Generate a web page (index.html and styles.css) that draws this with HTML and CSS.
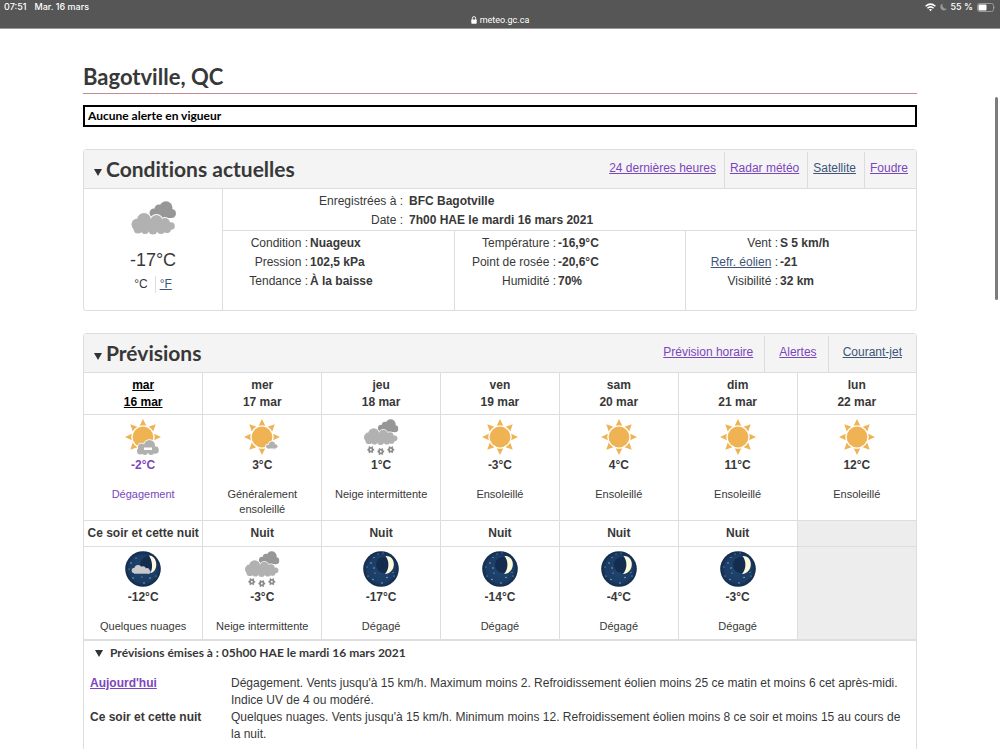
FILE: index.html
```html
<!DOCTYPE html>
<html lang="fr">
<head>
<meta charset="utf-8">
<meta name="viewport" content="width=device-width, initial-scale=1">
<title>Bagotville, QC</title>
<link rel="stylesheet" href="styles.css">
</head>
<body>
<svg class="defs" width="0" height="0" aria-hidden="true">
  <defs>
    <radialGradient id="sky"><stop offset="0" stop-color="#1f4570"/><stop offset=".75" stop-color="#1b3d66"/><stop offset="1" stop-color="#122a49"/></radialGradient>
    <symbol id="sun" viewBox="0 0 36 36">
      <g fill="#f0b354">
        <circle cx="18" cy="18" r="10.400"/>
        <path id="ray" d="M18 0l3.300 6.800q-3.300-1.200-6.600 0z"/>
        <use href="#ray" transform="rotate(45 18 18)"/><use href="#ray" transform="rotate(90 18 18)"/><use href="#ray" transform="rotate(135 18 18)"/><use href="#ray" transform="rotate(180 18 18)"/><use href="#ray" transform="rotate(225 18 18)"/><use href="#ray" transform="rotate(270 18 18)"/><use href="#ray" transform="rotate(315 18 18)"/>
      </g>
    </symbol>
    <symbol id="mostly-sunny" viewBox="0 0 36 36">
      <use href="#sun" width="36" height="36"/>
      <g id="puff"><circle cx="24" cy="27.500" r="2"/><circle cx="28" cy="25.500" r="3"/><circle cx="31.500" cy="27.300" r="2"/><rect x="24" y="26" width="8" height="3.500"/></g>
      <use href="#puff" fill="#fff" stroke="#fff" stroke-width="1.600"/>
      <use href="#puff" fill="#b0b0b0"/>
    </symbol>
    <symbol id="clearing" viewBox="0 0 36 36">
      <use href="#sun" width="36" height="36"/>
      <g id="heap"><circle cx="16.500" cy="28" r="3.500"/><circle cx="15.500" cy="32" r="3.500"/><circle cx="24.500" cy="26.500" r="5.500"/><circle cx="30" cy="31" r="3.800"/><circle cx="20" cy="33.500" r="2.500"/><circle cx="26" cy="33" r="3"/><rect x="17" y="26" width="12" height="8"/></g>
      <use href="#heap" fill="#fff" stroke="#fff" stroke-width="1.600"/>
      <use href="#heap" fill="#b0b0b0"/>
      <rect x="19" y="28.500" width="8" height="2.500" fill="#fff"/>
    </symbol>
    <symbol id="cloudy" viewBox="0 0 45 34">
      <g fill="#979797"><circle cx="35" cy="6.800" r="6.500"/><circle cx="28" cy="8" r="4.500"/><circle cx="23" cy="12" r="4.500"/><circle cx="40.500" cy="12.500" r="4.500"/><rect x="24" y="8" width="16" height="9"/></g>
      <g id="bank"><circle cx="13" cy="19" r="7"/><circle cx="6.500" cy="23.500" r="6"/><circle cx="7" cy="28" r="4.500"/><circle cx="25.500" cy="20" r="6"/><circle cx="34" cy="22" r="5"/><circle cx="40" cy="25" r="3.800"/><circle cx="36" cy="28" r="4"/><circle cx="30" cy="29" r="4"/><circle cx="22" cy="29" r="4.500"/><circle cx="14" cy="29" r="4"/><rect x="8" y="18" width="28" height="12"/></g>
      <use href="#bank" fill="#fff" stroke="#fff" stroke-width="1.800"/>
      <use href="#bank" fill="#b1b1b1"/>
    </symbol>
    <symbol id="flurries" viewBox="0 0 36 37">
      <use href="#cloudy" width="36" height="27"/>
      <g stroke="#8b8b8b" fill="none">
        <g id="flake"><circle cx="7.500" cy="31.500" r="1.900" stroke-width="1.800"/><path d="M5.800 31.500h-1.800M9.200 31.500h1.800M6.500 29.500l-.9-1.200M8.500 29.500l.9-1.200M6.500 33.500l-.9 1.200M8.500 33.500l.9 1.200" stroke-width="1.500"/></g>
        <use href="#flake" x="10.300" y="2"/><use href="#flake" x="20.600"/>
      </g>
    </symbol>
    <symbol id="night" viewBox="0 0 36 36">
      <circle cx="18" cy="18" r="17.800" fill="url(#sky)"/>
      <circle cx="21" cy="14" r="8" fill="#142d4e"/>
      <path d="M22.500 5C33.500 4 34 22 22 23C26.500 18 26.500 10 22.500 5z" fill="#fdfbdc"/>
      <g fill="#a9bccd"><circle cx="11" cy="6.500" r=".6"/><circle cx="8" cy="12" r=".7"/><circle cx="4" cy="16" r=".5"/><circle cx="11" cy="17" r=".7"/><circle cx="12" cy="22" r=".6"/><circle cx="5" cy="25" r=".6"/><circle cx="10" cy="28.500" r=".7"/><circle cx="19" cy="32" r=".7"/><circle cx="24" cy="26.500" r=".7"/><circle cx="31" cy="25" r=".6"/><circle cx="30" cy="21.500" r=".5"/><circle cx="15" cy="3" r=".5"/><circle cx="20" cy="2" r=".5"/></g>
    </symbol>
    <symbol id="night-cloud" viewBox="0 0 36 36">
      <circle cx="18" cy="18" r="17.800" fill="url(#sky)"/>
      <path d="M15 15c0-6 4-10 10-10 3 5 3 9 1 14z" fill="#142d4e"/>
      <path d="M24 4.500C33.500 5 33.500 21 25.500 22C28 17 27.500 10 24 4.500z" fill="#fdfbdc"/>
      <g fill="#c9c9cb"><circle cx="9.500" cy="19.500" r="2.800"/><circle cx="13" cy="17.500" r="3.500"/><circle cx="18" cy="18" r="2.800"/><circle cx="22" cy="19.500" r="2.500"/><circle cx="24" cy="21" r="1.700"/><rect x="9" y="18" width="15" height="4.700"/></g>
      <g fill="#a9bccd"><circle cx="11" cy="7" r=".6"/><circle cx="6" cy="12" r=".7"/><circle cx="4" cy="18" r=".5"/><circle cx="8" cy="27" r=".7"/><circle cx="17" cy="26" r=".6"/><circle cx="19" cy="32" r=".7"/><circle cx="25" cy="27" r=".7"/><circle cx="31" cy="25" r=".6"/></g>
    </symbol>
  </defs>
</svg>

<header class="status">
  <div class="status-row">
    <div class="status-group"><time>07:51</time><span>Mar. 16 mars</span></div>
    <div class="status-group status-right">
      <svg width="11" height="9" viewBox="0 0 11 9" fill="none" stroke="#fff" stroke-width="1.500" aria-label="Wi-Fi"><path d="M.6 3.200q4.900-4.200 9.800 0M2.400 5.200q3.100-2.600 6.200 0"/><path d="M3.900 6.500q1.600-1.200 3.200 0L5.500 8.300z" fill="#fff" stroke="none"/></svg>
      <svg width="7" height="8" viewBox="0 0 7 8" aria-hidden="true"><path d="M2.500.5C.3 1.500-.3 4 1 6 2.400 7.900 5.500 7.900 6.900 5.700 3.800 6.300 1.700 3.500 2.500.5z" fill="#999"/></svg>
      <span>55 %</span>
      <svg width="19" height="9" viewBox="0 0 19 9" aria-label="Batterie"><rect x=".5" y=".5" width="16" height="8" rx="2" fill="none" stroke="#999"/><rect x="1.500" y="1.500" width="8" height="6" rx="1" fill="#fff"/><path d="M17.500 3v3q1.500-1.500 0-3" fill="#999"/></svg>
    </div>
  </div>
  <div class="address">
    <svg width="6" height="8" viewBox="0 0 6 8" aria-hidden="true"><rect x=".3" y="3.500" width="5.400" height="4.300" rx=".7" fill="#fff"/><path d="M1.300 4V2.300a1.700 1.700 0 0 1 3.400 0V4" fill="none" stroke="#fff" stroke-width=".9"/></svg>
    <span>meteo.gc.ca</span>
  </div>
</header>
<div class="scroll-thumb"></div>

<main>
  <h1>Bagotville, QC</h1>
  <p class="alert">Aucune alerte en vigueur</p>

  <details class="card" open>
    <summary class="card-head">
      <span class="marker"></span>
      <h2>Conditions actuelles</h2>
      <nav class="tabs">
        <a class="visited" href="#h24">24 dernières heures</a>
        <a class="visited" href="#radar">Radar météo</a>
        <a href="#satellite">Satellite</a>
        <a class="visited" href="#foudre">Foudre</a>
      </nav>
    </summary>
    <div class="current">
      <div class="now">
        <svg width="45" height="34" role="img" aria-label="Nuageux"><use href="#cloudy"/></svg>
        <p class="now-temp">-17°C</p>
        <p class="units"><span>°C</span><a href="#f">°F</a></p>
      </div>
      <div class="facts">
        <dl class="station">
          <dt>Enregistrées à :</dt><dd>BFC Bagotville</dd>
          <dt>Date :</dt><dd>7h00 HAE le mardi 16 mars 2021</dd>
        </dl>
        <div class="measures">
          <dl class="sky">
            <dt>Condition :</dt><dd>Nuageux</dd>
            <dt>Pression :</dt><dd>102,5 kPa</dd>
            <dt>Tendance :</dt><dd>À la baisse</dd>
          </dl>
          <dl class="heat">
            <dt>Température :</dt><dd>-16,9°C</dd>
            <dt>Point de rosée :</dt><dd>-20,6°C</dd>
            <dt>Humidité :</dt><dd>70%</dd>
          </dl>
          <dl class="wind">
            <dt>Vent :</dt><dd>S 5 km/h</dd>
            <dt><a href="#refr">Refr. éolien</a> :</dt><dd>-21</dd>
            <dt>Visibilité :</dt><dd>32 km</dd>
          </dl>
        </div>
      </div>
    </div>
  </details>

  <details class="card" open>
    <summary class="card-head">
      <span class="marker"></span>
      <h2>Prévisions</h2>
      <nav class="tabs wide">
        <a class="visited" href="#horaire">Prévision horaire</a>
        <a class="visited" href="#alertes">Alertes</a>
        <a href="#courant">Courant-jet</a>
      </nav>
    </summary>
    <table class="week">
      <thead>
        <tr class="days">
          <th scope="col" class="today">mar<br>16 mar</th>
          <th scope="col">mer<br>17 mar</th>
          <th scope="col">jeu<br>18 mar</th>
          <th scope="col">ven<br>19 mar</th>
          <th scope="col">sam<br>20 mar</th>
          <th scope="col">dim<br>21 mar</th>
          <th scope="col">lun<br>22 mar</th>
        </tr>
      </thead>
      <tbody>
        <tr class="day">
          <td class="visited"><svg class="icon" aria-hidden="true"><use href="#clearing"/></svg><b>-2°C</b><p>Dégagement</p></td>
          <td><svg class="icon" aria-hidden="true"><use href="#mostly-sunny"/></svg><b>3°C</b><p>Généralement ensoleillé</p></td>
          <td><svg class="icon" aria-hidden="true"><use href="#flurries"/></svg><b>1°C</b><p>Neige intermittente</p></td>
          <td><svg class="icon" aria-hidden="true"><use href="#sun"/></svg><b>-3°C</b><p>Ensoleillé</p></td>
          <td><svg class="icon" aria-hidden="true"><use href="#sun"/></svg><b>4°C</b><p>Ensoleillé</p></td>
          <td><svg class="icon" aria-hidden="true"><use href="#sun"/></svg><b>11°C</b><p>Ensoleillé</p></td>
          <td><svg class="icon" aria-hidden="true"><use href="#sun"/></svg><b>12°C</b><p>Ensoleillé</p></td>
        </tr>
        <tr class="nights">
          <th>Ce soir et cette nuit</th><th>Nuit</th><th>Nuit</th><th>Nuit</th><th>Nuit</th><th>Nuit</th><td class="empty"></td>
        </tr>
        <tr class="night">
          <td><svg class="icon" aria-hidden="true"><use href="#night-cloud"/></svg><b>-12°C</b><p>Quelques nuages</p></td>
          <td><svg class="icon" aria-hidden="true"><use href="#flurries"/></svg><b>-3°C</b><p>Neige intermittente</p></td>
          <td><svg class="icon" aria-hidden="true"><use href="#night"/></svg><b>-17°C</b><p>Dégagé</p></td>
          <td><svg class="icon" aria-hidden="true"><use href="#night"/></svg><b>-14°C</b><p>Dégagé</p></td>
          <td><svg class="icon" aria-hidden="true"><use href="#night"/></svg><b>-4°C</b><p>Dégagé</p></td>
          <td><svg class="icon" aria-hidden="true"><use href="#night"/></svg><b>-3°C</b><p>Dégagé</p></td>
          <td class="empty"></td>
        </tr>
      </tbody>
    </table>
    <details class="bulletin" open>
      <summary><span class="marker"></span>Prévisions émises à : 05h00 HAE le mardi 16 mars 2021</summary>
      <dl>
        <dt><a class="visited" href="#aujourdhui">Aujourd'hui</a></dt>
        <dd>Dégagement. Vents jusqu'à 15 km/h. Maximum moins 2. Refroidissement éolien moins 25 ce matin et moins 6 cet après-midi. Indice UV de 4 ou modéré.</dd>
        <dt>Ce soir et cette nuit</dt>
        <dd>Quelques nuages. Vents jusqu'à 15 km/h. Minimum moins 12. Refroidissement éolien moins 8 ce soir et moins 15 au cours de la nuit.</dd>
      </dl>
    </details>
  </details>
</main>
</body>
</html>
```

FILE: styles.css
```css
* { box-sizing: border-box; }

body {
  margin: 0;
  height: 100vh;
  overflow: hidden;
  background: #fff;
  color: #383838;
  font: 12px/17px "Liberation Sans", Arial, sans-serif;
}

h1, h2, p, dl, dd { margin: 0; }
a { color: #3e5478; }
.visited { color: #7b46bd; }
.defs { position: absolute; }

.status {
  height: 29px;
  background: #565656;
  border-bottom: 1px solid #999;
  color: #fff;
  font: 9px/14px Inter, sans-serif;
}
.status-row { display: flex; justify-content: space-between; padding: 0 4px; font-weight: 500; }
.status-group { display: flex; align-items: center; gap: 8px; }
.status-right { gap: 4px; }
.address {
  display: flex;
  justify-content: center;
  align-items: center;
  gap: 3px;
  font: 9px/12px Roboto, sans-serif;
}

.scroll-thumb {
  position: absolute;
  top: 97px;
  right: 2px;
  width: 3px;
  height: 203px;
  border-radius: 2px;
  background: #7c7c7c;
}

main { padding: 33px 83px 0; }

h1, h2, .alert, .bulletin summary { font-variant-ligatures: none; }

h1 {
  padding-bottom: 1px;
  border-bottom: 1px solid #c08c94;
  font: bold 22px/30px Lato, sans-serif;
  font-variant-ligatures: none;
}

.alert {
  margin: 11px 0 22px;
  padding: 0 3px;
  border: 2px solid #000;
  color: #000;
  font: bold 12px/18px Lato, sans-serif;
}

.card {
  margin-bottom: 22px;
  border: 1px solid #ddd;
  border-radius: 3px;
}
.card-head {
  display: flex;
  align-items: center;
  height: 39px;
  padding-left: 10px;
  background: #f4f4f4;
  border-bottom: 1px solid #ddd;
}
h2 {
  font: bold 21px/30px Lato, sans-serif;
  font-variant-ligatures: none;
}
.marker {
  margin: 6px 4px 0 0;
  border: 4px solid transparent;
  border-top: 7px solid #333;
  border-bottom: 0;
}

.tabs { display: flex; align-self: stretch; margin-left: auto; padding-top: 2px; }
.tabs a { padding: 8px 8px 0 5px; }
.tabs a + a { border-left: 1px solid #ddd; }
.wide a { padding: 8px 11px 0 14px; }
.wide a:last-child { padding-right: 14px; }

.current { display: grid; grid-template-columns: 138px 1fr; min-height: 121px; }
.now { display: flex; flex-direction: column; align-items: center; padding-top: 12px; }
.now-temp { margin-top: 13px; font-size: 18px; line-height: 24px; }
.units { display: flex; margin-top: 4px; }
.units a { margin-left: 7px; padding-left: 4px; border-left: 1px solid #ddd; }

.facts { display: grid; grid-template-rows: auto 1fr; border-left: 1px solid #ddd; }
.facts dl { display: grid; align-content: start; column-gap: 2px; line-height: 19px; }
.facts dt { text-align: right; }
.facts dd { font-weight: bold; }
.facts .station {
  grid-template-columns: 180px 1fr;
  column-gap: 6px;
  padding: 3px 0 0;
  border-bottom: 1px solid #ddd;
}
.measures { display: grid; grid-template-columns: repeat(3, 1fr); }
.measures dl { padding-top: 3px; }
.measures dl + dl { border-left: 1px solid #ddd; }
.sky { grid-template-columns: 85px 1fr; }
.heat { grid-template-columns: 101px 1fr; }
.wind { grid-template-columns: 92px 1fr; }

.week { width: 100%; table-layout: fixed; border-collapse: collapse; text-align: center; }
.week th, .week td { padding: 0; border: 1px solid #ddd; vertical-align: top; }
.week tr:first-child th { border-top: 0; }
.week th:first-child, .week td:first-child { border-left: 0; }
.week th:last-child, .week td:last-child { border-right: 0; }
.week .days th { padding: 4px 0 3px; }
.week .today { color: #000; text-decoration: underline; }
.day { height: 106px; }
.night { height: 93px; }
.week .nights th { padding: 4px 0; }
.week td { padding-top: 4px; }
.icon { display: block; width: 36px; height: 36px; margin: 0 auto; }
.week b { display: block; line-height: 20px; }
.week p { margin-top: 12px; padding: 0 12px; font-size: 11px; line-height: 15px; }
.week td.visited { color: #7b46bd; }
.week .empty { background: #ededed; }

.bulletin { border-top: 1px solid #ddd; }
.bulletin summary {
  display: flex;
  align-items: center;
  padding: 3px 11px;
  font: bold 12px/18px Lato, sans-serif;
}
.bulletin .marker { margin: 0 7px 0 0; }
.bulletin dl { display: grid; grid-template-columns: 141px 1fr; padding: 10px 6px 40px; }
.bulletin dt { font-weight: bold; }
```
